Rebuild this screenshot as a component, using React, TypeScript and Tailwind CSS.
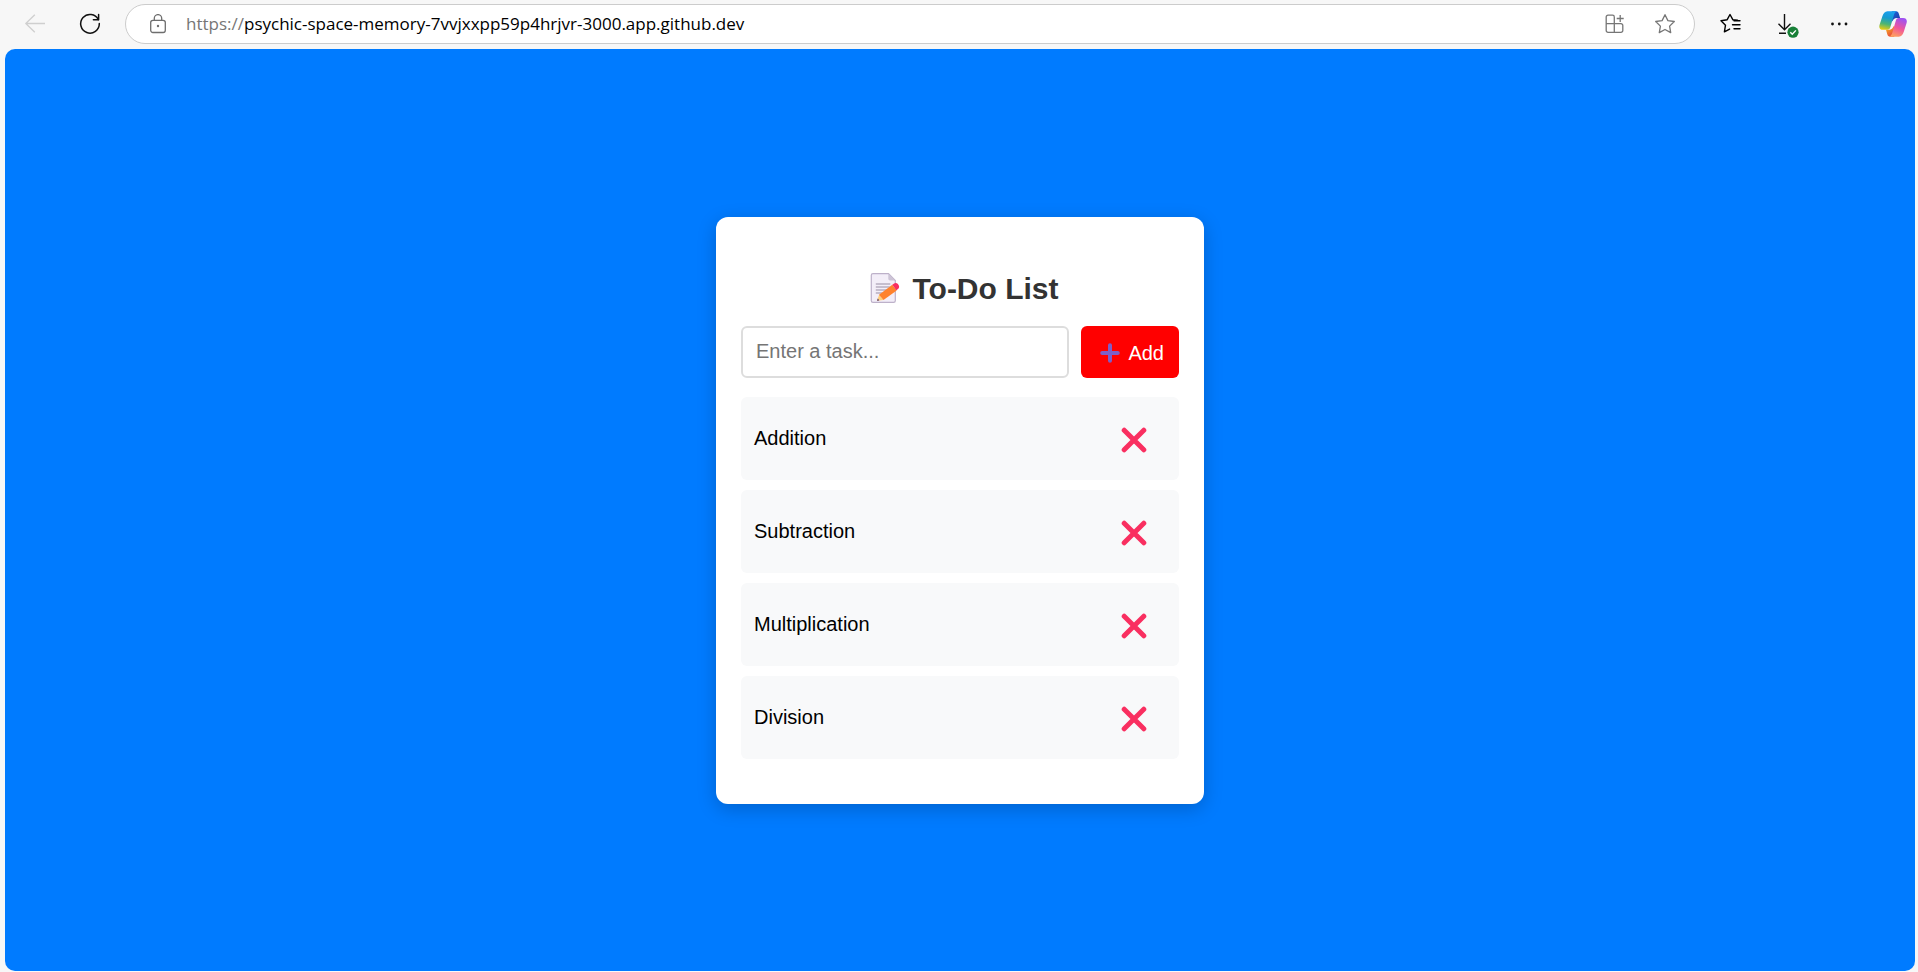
import { useState } from "react";
import type { FormEvent, ReactNode } from "react";

function IconButton({ label, size = "size-7", children }: { label: string; size?: string; children: ReactNode }) {
  return (
    <button type="button" aria-label={label} className={`${size} flex shrink-0 items-center justify-center`}>
      {children}
    </button>
  );
}

function BackIcon() {
  return (
    <svg viewBox="0 0 24 24" className="size-6 text-[#cfcfcf]" fill="none" stroke="currentColor" strokeWidth="1.3">
      <path d="M22 11.5H2.8M11.8 2.8 2.8 11.5l9 8.7" strokeLinejoin="round" />
    </svg>
  );
}

function ReloadIcon() {
  return (
    <svg viewBox="0 0 24 24" className="size-6 text-[#111111]" fill="none" stroke="currentColor" strokeWidth="1.5" strokeLinecap="round" strokeLinejoin="round">
      <path d="M20.3 7.6A9.3 9.3 0 1 0 21.3 11.6" />
      <path d="M20.6 2.6v5.2h-5.2" />
    </svg>
  );
}

function LockIcon() {
  return (
    <svg viewBox="0 0 16 20" className="h-5 w-4 shrink-0 text-[#6e6e6e]" fill="none" stroke="currentColor" strokeWidth="1.3">
      <rect x=".7" y="6.3" width="14.6" height="12.2" rx="2.2" />
      <path d="M4.3 6.2V4.3a3.7 3.7 0 0 1 7.4 0v1.9" />
      <circle cx="8" cy="12" r="1.2" fill="currentColor" stroke="none" />
    </svg>
  );
}

function AppsIcon() {
  return (
    <svg viewBox="0 0 20 20" className="size-5 text-[#767676]" fill="none" stroke="currentColor" strokeWidth="1.3">
      <path d="M9.3 18.3H3A1.8 1.8 0 0 1 1.2 16.5V3A1.8 1.8 0 0 1 3 1.2h4.5A1.8 1.8 0 0 1 9.3 3v15.3h6.7a1.8 1.8 0 0 0 1.8-1.8v-5A1.8 1.8 0 0 0 16 9.7H1.2" />
      <path d="M15.2 1v7M11.7 4.5h7" />
    </svg>
  );
}

function StarIcon() {
  return (
    <svg viewBox="0 0 22 22" className="size-[22px] text-[#767676]" fill="none" stroke="currentColor" strokeWidth="1.3" strokeLinejoin="round">
      <path d="m11 1.700 2.900 5.900 6.400.9-4.700 4.600 1.100 6.500L11 16.500l-5.700 3.100 1.100-6.500L1.700 8.500l6.400-.9z" />
    </svg>
  );
}

function FavoritesIcon() {
  return (
    <svg viewBox="0 0 28 28" className="size-7 text-black" fill="none" stroke="currentColor" strokeWidth="1.400" strokeLinejoin="round" strokeLinecap="round">
      <path d="M20.500 10.300 15.800 9.700 13 4.500l-2.800 5.200-6.200 1 4.500 4.500L7.400 21.900l5.200-2.800" />
      <path d="M17 10.800h6M15.500 14.800H23M17 18.800h6" />
    </svg>
  );
}

function DownloadIcon() {
  return (
    <svg viewBox="0 0 28 28" className="size-7" fill="none" stroke="#111111" strokeWidth="1.400">
      <path d="M13.500 4v15.500M7.500 13.800l6 6 6-6M8 23.300h7" />
      <circle cx="22" cy="22.200" r="5.600" fill="#188038" stroke="none" />
      <path d="m19.300 22.300 2 2 3.600-3.900" stroke="white" />
    </svg>
  );
}

function MoreIcon() {
  return (
    <svg viewBox="0 0 28 28" className="size-7" fill="#111111">
      <circle cx="7.500" cy="14" r="1.400" />
      <circle cx="14.300" cy="14" r="1.400" />
      <circle cx="21" cy="14" r="1.400" />
    </svg>
  );
}

function CopilotIcon() {
  return (
    <svg viewBox="0 0 28 28" className="size-7">
      <defs>
        <linearGradient id="cool" x1="9" y1="1" x2="5" y2="20" gradientUnits="userSpaceOnUse">
          <stop offset="0" stopColor="#1a9ff0" />
          <stop offset=".35" stopColor="#169bd0" />
          <stop offset=".68" stopColor="#4db574" />
          <stop offset="1" stopColor="#f2cc0c" />
        </linearGradient>
        <linearGradient id="warm" x1="23" y1="9" x2="16" y2="27" gradientUnits="userSpaceOnUse">
          <stop offset="0" stopColor="#a052f0" />
          <stop offset=".5" stopColor="#f0559b" />
          <stop offset="1" stopColor="#ffa25c" />
        </linearGradient>
        <linearGradient id="fold" x1="13" y1="1" x2="20" y2="8" gradientUnits="userSpaceOnUse">
          <stop offset="0" stopColor="#1765dc" />
          <stop offset="1" stopColor="#2142b0" />
        </linearGradient>
        <linearGradient id="base" x1="8" y1="19" x2="13" y2="26" gradientUnits="userSpaceOnUse">
          <stop offset="0" stopColor="#f5a223" />
          <stop offset="1" stopColor="#e8453f" />
        </linearGradient>
      </defs>
      <path d="M13 1.200h4c1.700 0 2.400 1.100 2.900 2.700l1.200 4.100h-3.300c-2.400 0-3.600 1.400-4.400 3.600L11 5z" fill="url(#fold)" />
      <path d="M15 26.800h-3.700c-1.800 0-2.600-1.100-3.100-2.800L7 19.800h3c2.600 0 3.700-1.300 4.500-3.800L18 22z" fill="url(#base)" />
      <path d="M15.800 1.200H8.500C5.800 1.200 4.400 3.500 3.400 6.200L.6 14.700C-.4 18 1 19.800 4 19.800h4.300c1.700 0 2.600-1 3.100-2.700l3.300-11.300c.7-2.300 1.400-3.900 3.200-4.200z" fill="url(#cool)" />
      <path d="M12.800 26.800h7c2.700 0 4-2.300 5-5l2.700-8.500c1-3.300-.3-5.300-3.400-5.300h-4.300c-1.700 0-2.500 1-3 2.700L13.500 22c-.7 2.300-1.600 4.200-3.200 4.500z" fill="url(#warm)" />
    </svg>
  );
}

function MemoIcon() {
  return (
    <svg viewBox="0 0 30 32" className="h-8 w-[30px] shrink-0">
      <path d="M3 1.600h15.500l6.800 6.900v20.200a1.700 1.700 0 0 1-1.700 1.700H3a1.700 1.700 0 0 1-1.700-1.700V3.300A1.700 1.700 0 0 1 3 1.600z" fill="#f3eef8" stroke="#bdb1c9" strokeWidth="1.200" />
      <path d="M18.300 1.600v5.200a1.700 1.700 0 0 0 1.700 1.700h5.300z" fill="#cdc4d6" />
      <path d="M5.800 12h14.500M5.800 15h14M5.800 18h11M5.800 21h8" stroke="#998ea4" strokeWidth="1.100" />
      <path d="m7 28.800 2.200-6.300 4.300 5.500z" fill="#ffce7c" />
      <path d="m7 28.800.8-2.300 1.500 1.900z" fill="#533566" />
      <path d="m9 22.700 13.300-9.900 4.400 5.600-13.200 9.700z" fill="#ff822d" />
      <path d="m22.300 12.800 1.800-1.300c1.200-.9 2.900-.6 3.800.6l.8 1.200c.8 1.200.5 2.800-.7 3.700l-1.600 1.200z" fill="#f92f60" />
    </svg>
  );
}

function PlusIcon() {
  return (
    <svg viewBox="0 0 20 20" className="size-5 shrink-0" stroke="#7d5fc7" strokeWidth="4" strokeLinecap="round">
      <path d="M10 2.200v15.600M2.200 10h15.600" />
    </svg>
  );
}

function CrossIcon() {
  return (
    <svg viewBox="0 0 26 26" className="size-[26px]" stroke="#f92f60" strokeWidth="5" strokeLinecap="round">
      <path d="M3.200 3.200 22.800 22.800M22.800 3.200 3.200 22.800" />
    </svg>
  );
}

function BrowserBar() {
  return (
    <header className="flex items-center pt-1 pr-[11px] pb-[5px] pl-[23px]">
      <nav aria-label="Browser navigation" className="flex gap-[31px]">
        <IconButton label="Back" size="size-6"><BackIcon /></IconButton>
        <IconButton label="Reload" size="size-6"><ReloadIcon /></IconButton>
      </nav>
      <div className="mr-[22px] ml-[23px] flex h-10 flex-1 items-center rounded-full border border-[#cccccc] bg-white pr-[18px] pl-6 font-['Open_Sans','Noto_Sans',sans-serif] text-[17px]">
        <LockIcon />
        <label htmlFor="address" className="ml-5 text-[#767676]">https://</label>
        <input
          id="address"
          defaultValue="psychic-space-memory-7vvjxxpp59p4hrjvr-3000.app.github.dev"
          spellCheck={false}
          className="min-w-0 flex-1 bg-transparent text-black outline-none"
        />
        <div className="flex items-center gap-[29px]">
          <IconButton label="Apps" size="size-5"><AppsIcon /></IconButton>
          <IconButton label="Add to favorites" size="size-[22px]"><StarIcon /></IconButton>
        </div>
      </div>
      <div className="flex gap-[26px]">
        <IconButton label="Favorites"><FavoritesIcon /></IconButton>
        <IconButton label="Downloads"><DownloadIcon /></IconButton>
        <IconButton label="More"><MoreIcon /></IconButton>
        <IconButton label="Copilot"><CopilotIcon /></IconButton>
      </div>
    </header>
  );
}

function TodoCard() {
  const [tasks, setTasks] = useState(["Addition", "Subtraction", "Multiplication", "Division"]);
  const [draft, setDraft] = useState("");

  const addTask = (event: FormEvent) => {
    event.preventDefault();
    if (!draft.trim()) return;
    setTasks([...tasks, draft.trim()]);
    setDraft("");
  };

  return (
    <section className="w-full max-w-[488px] rounded-xl bg-white px-[25px] pt-[54px] pb-[45px] shadow-[0_5px_19px_rgba(0,0,0,0.2)]">
      <h1 className="mb-5 flex items-center justify-center gap-3 pl-[9px] text-[30px] leading-[35px] font-bold text-[#333333]">
        <MemoIcon />
        To-Do List
      </h1>
      <form onSubmit={addTask} className="flex gap-3">
        <input
          aria-label="New task"
          placeholder="Enter a task..."
          value={draft}
          onChange={(event) => setDraft(event.target.value)}
          className="h-[52px] min-w-0 flex-1 rounded-md border-2 border-[#dddddd] px-[13px] pb-px outline-none placeholder:text-[#757575]"
        />
        <button type="submit" className="flex items-center gap-2 rounded-md bg-[#ff0000] pt-0.5 pr-[15px] pl-[19px] text-white">
          <PlusIcon />
          Add
        </button>
      </form>
      <ul className="mt-[19px] flex flex-col gap-[10px]">
        {tasks.map((task, index) => (
          <li key={task + index} className="flex items-center justify-between rounded-md bg-[#f8f9fa] pr-3 pl-[13px] py-[10px]">
            <span>{task}</span>
            <button
              type="button"
              aria-label={`Delete ${task}`}
              onClick={() => setTasks(tasks.filter((_, i) => i !== index))}
              className="px-5 pt-5 pb-[17px]"
            >
              <CrossIcon />
            </button>
          </li>
        ))}
      </ul>
    </section>
  );
}

export default function App() {
  return (
    <div className="flex min-h-screen flex-col bg-[#f7f7f7] pb-px font-['Liberation_Sans',Arial,sans-serif] text-[20px] leading-6 text-black">
      <BrowserBar />
      <main className="mr-[3px] ml-[5px] flex flex-1 items-center justify-center rounded-[10px] bg-[#007bff]">
        <TodoCard />
      </main>
    </div>
  );
}
